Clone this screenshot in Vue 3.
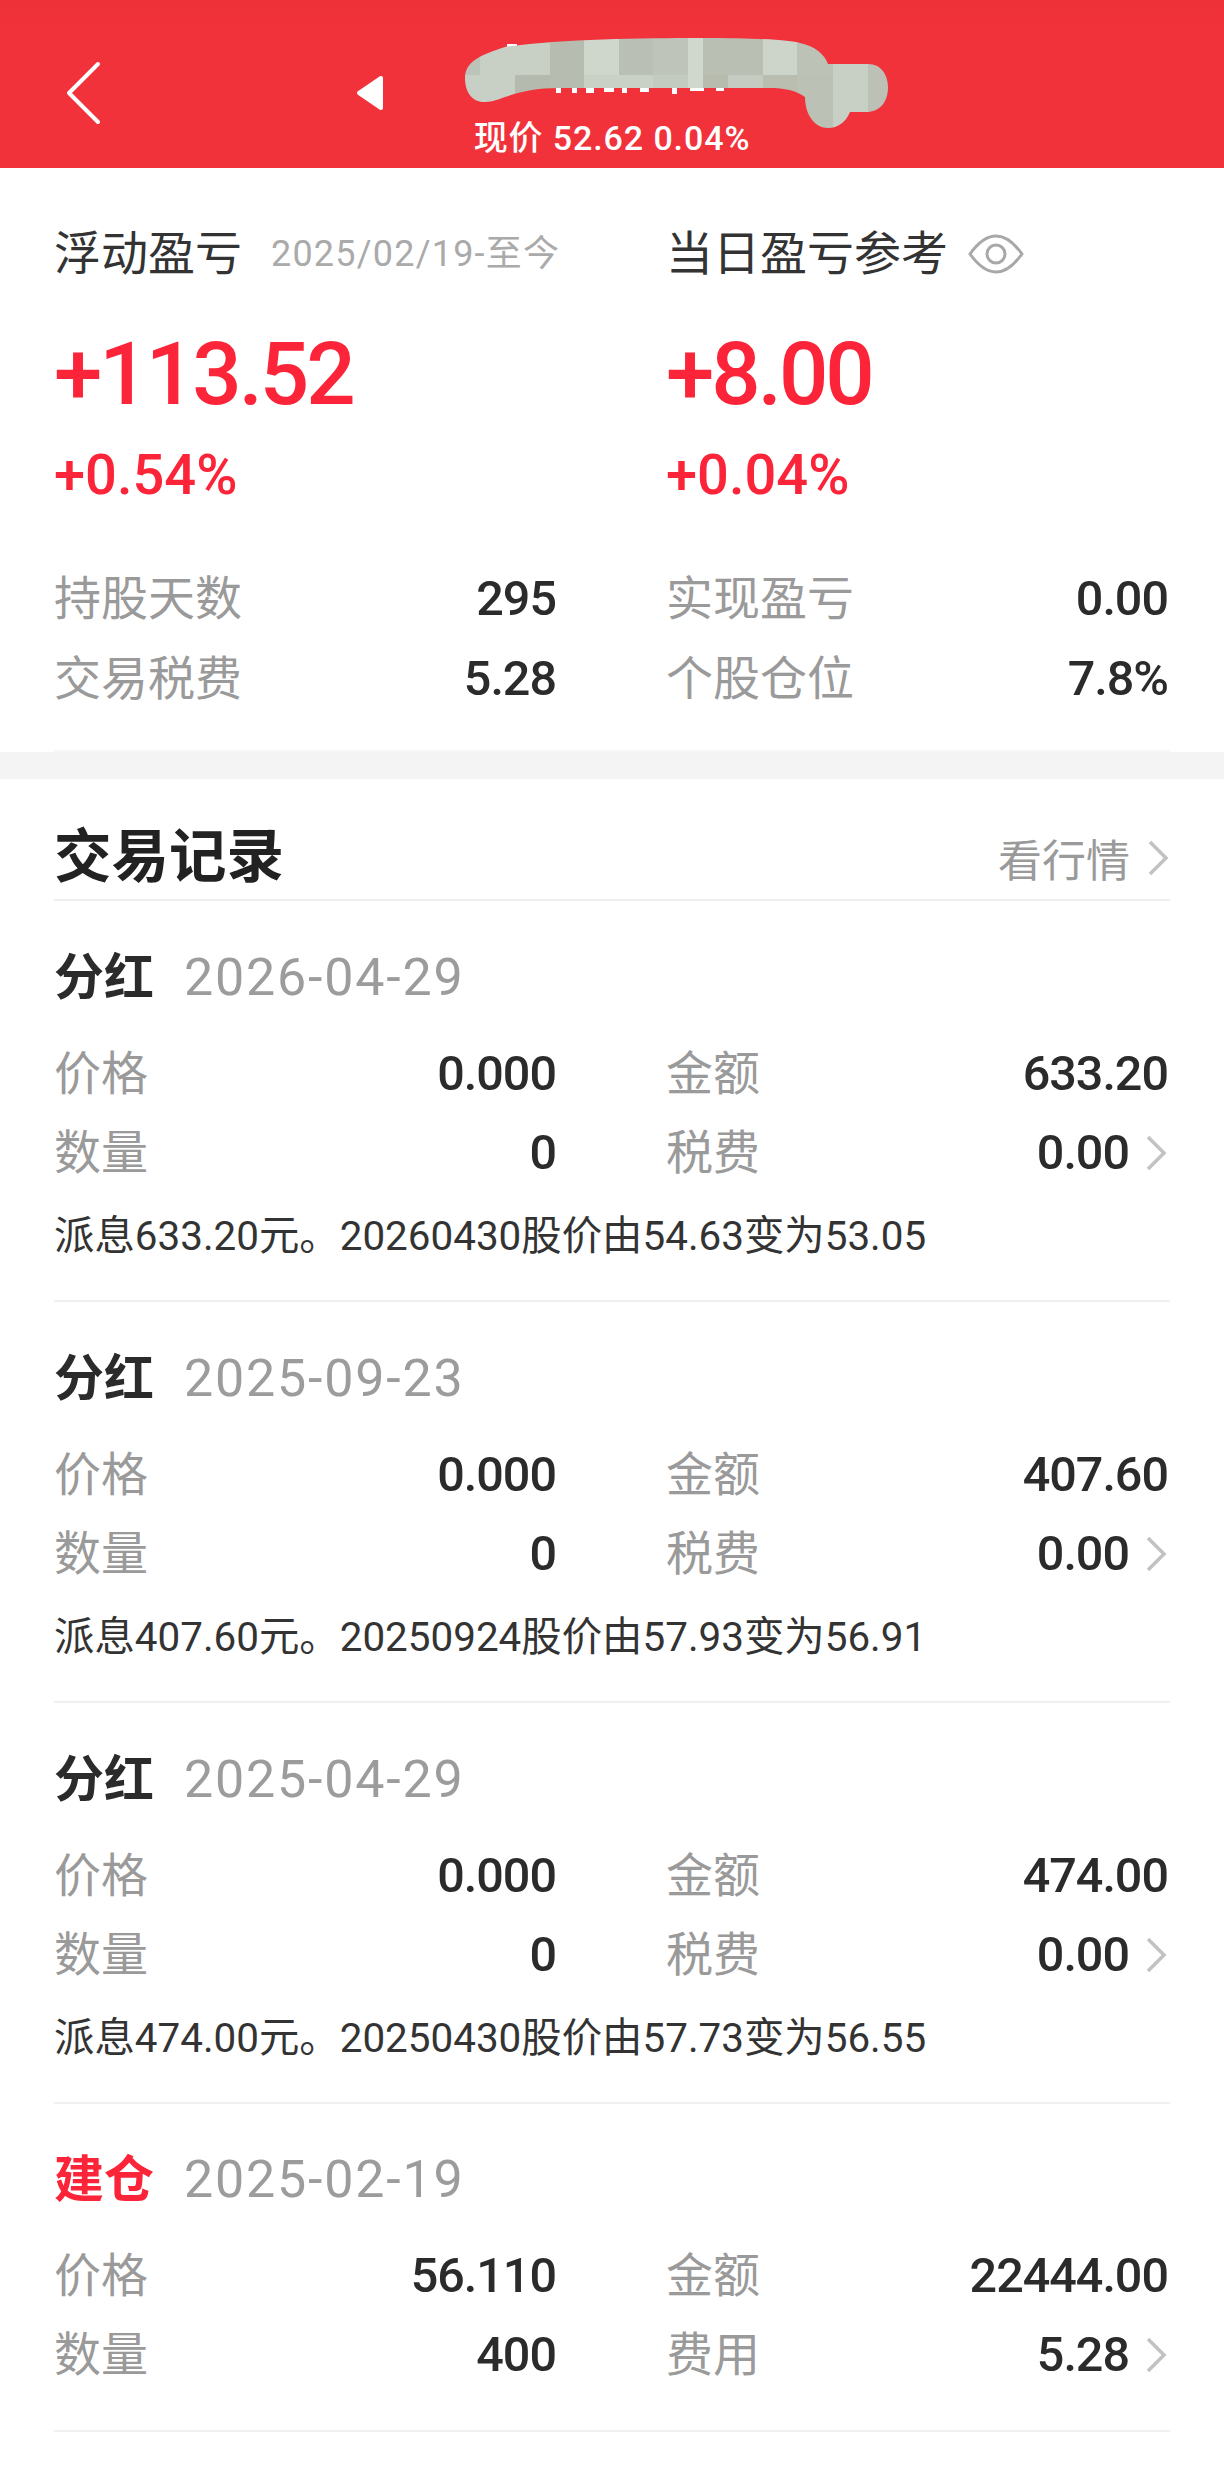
<script setup>
const topTiles = [
  [465, 15, '#bcc4b9'], [480, 70, '#c8cfc4'], [550, 34, '#b6bcb0'], [584, 35, '#cfd6cc'],
  [619, 34, '#b9bfb4'], [653, 35, '#bec4b9'], [688, 15, '#d0d8ce'], [703, 60, '#b9bfb3'],
  [763, 34, '#cdd4ca'], [797, 36, '#bdc2b6'], [833, 35, '#c8cfc4'], [868, 22, '#bdc1b5']
]
const lowTiles = [
  [465, 50, '#c8cfc4'], [515, 35, '#b4baad'], [550, 34, '#b6bcb0'], [584, 69, '#c9d0c6'],
  [653, 35, '#c3cabf'], [688, 15, '#d0d8ce'], [703, 25, '#b7bcae'], [728, 35, '#c5cbc0'],
  [763, 34, '#b9beb1'], [797, 36, '#bcc1b5'], [833, 35, '#c8cfc4'], [868, 22, '#bdc1b5']
]
const scraps = [
  [507, 44, 10, 4], [556, 88, 5, 5], [572, 88, 5, 5], [586, 88, 8, 5], [604, 88, 10, 4],
  [622, 88, 5, 5], [640, 88, 9, 4], [672, 88, 5, 6], [690, 88, 14, 3], [716, 88, 8, 3]
]
const stats = [
  [{ label: '持股天数', value: '295' }, { label: '实现盈亏', value: '0.00' }],
  [{ label: '交易税费', value: '5.28' }, { label: '个股仓位', value: '7.8%' }]
]
const records = [
  { type: '分红', date: '2026-04-29', price: '0.000', amount: '633.20', qty: '0', feeLabel: '税费', fee: '0.00', note: '派息633.20元。20260430股价由54.63变为53.05' },
  { type: '分红', date: '2025-09-23', price: '0.000', amount: '407.60', qty: '0', feeLabel: '税费', fee: '0.00', note: '派息407.60元。20250924股价由57.93变为56.91' },
  { type: '分红', date: '2025-04-29', price: '0.000', amount: '474.00', qty: '0', feeLabel: '税费', fee: '0.00', note: '派息474.00元。20250430股价由57.73变为56.55' },
  { type: '建仓', date: '2025-02-19', price: '56.110', amount: '22444.00', qty: '400', feeLabel: '费用', fee: '5.28', note: '', buy: true }
]
</script>

<template>
  <div class="page">
    <header class="bar">
      <div class="bar-left">
        <svg class="back" viewBox="0 0 40 68" width="40" height="68">
          <path d="M33 5 L4 34 L33 63" fill="none" stroke="#fff" stroke-width="4" stroke-linecap="round" stroke-linejoin="round" />
        </svg>
        <svg class="tri" viewBox="0 0 30 38" width="30" height="38">
          <path d="M4 19 L26 4 L26 34 Z" fill="#fff" stroke="#fff" stroke-width="4" stroke-linejoin="round" />
        </svg>
      </div>
      <div class="sub">现价 52.62 0.04%</div>
      <svg class="blob" viewBox="460 30 440 105" width="440" height="105">
        <defs>
          <clipPath id="blobClip">
            <path d="M465 78 C465 62 480 55 505 47 C560 39 640 38 700 38 C760 38 790 40 800 43 C815 46 825 55 828 64 L868 64 C882 64 888 76 888 87 C888 102 880 112 866 112 L850 112 C846 122 838 128 828 128 C815 128 805 115 805 97 C798 92 790 89 775 88 L560 88 C535 88 520 92 505 97 C495 101 490 102 484 102 C472 102 465 92 465 78 Z" />
          </clipPath>
        </defs>
        <rect v-for="(s, i) in scraps" :key="'s' + i" :x="s[0]" :y="s[1]" :width="s[2]" :height="s[3]" fill="#fff" />
        <g clip-path="url(#blobClip)">
          <rect v-for="(t, i) in topTiles" :key="'t' + i" :x="t[0]" y="30" :width="t[1]" height="45" :fill="t[2]" />
          <rect v-for="(t, i) in lowTiles" :key="'l' + i" :x="t[0]" y="75" :width="t[1]" height="60" :fill="t[2]" />
        </g>
      </svg>
    </header>

    <section class="summary">
      <div class="cols head">
        <div class="head-cell">
          <span class="head-title">浮动盈亏</span>
          <span class="head-date">2025/02/19-至今</span>
        </div>
        <div class="head-cell">
          <span class="head-title">当日盈亏参考</span>
          <svg class="eye" viewBox="0 0 56 40" width="56" height="40">
            <path d="M2 20 C12 6 20 2 28 2 C36 2 44 6 54 20 C44 34 36 38 28 38 C20 38 12 34 2 20 Z" fill="none" stroke="#a8a8a8" stroke-width="3" />
            <circle cx="28" cy="20" r="9" fill="none" stroke="#a8a8a8" stroke-width="3" />
          </svg>
        </div>
      </div>
      <div class="cols big">
        <div>+113.52</div>
        <div>+8.00</div>
      </div>
      <div class="cols pct">
        <div>+0.54%</div>
        <div>+0.04%</div>
      </div>
      <div class="stat-list">
        <div v-for="(row, i) in stats" :key="i" class="cols kv">
          <div v-for="cell in row" :key="cell.label" class="pair">
            <span class="k">{{ cell.label }}</span>
            <span class="v">{{ cell.value }}</span>
          </div>
        </div>
      </div>
    </section>

    <div class="band"></div>

    <section class="trades">
      <div class="trades-head">
        <h2 class="trades-title">交易记录</h2>
        <div class="market">
          <span>看行情</span>
          <svg class="chev" viewBox="0 0 26 38" width="26" height="38">
            <path d="M6 3 L22 19 L6 35" fill="none" stroke="#c2c2c2" stroke-width="3.5" />
          </svg>
        </div>
      </div>

      <article v-for="r in records" :key="r.date" class="record" :class="{ last: r.buy }">
        <div class="rec-head">
          <span class="rec-type" :class="{ red: r.buy }">{{ r.type }}</span>
          <span class="rec-date">{{ r.date }}</span>
        </div>
        <div class="cols kv first">
          <div class="pair"><span class="k">价格</span><span class="v">{{ r.price }}</span></div>
          <div class="pair"><span class="k">金额</span><span class="v">{{ r.amount }}</span></div>
        </div>
        <div class="cols kv second">
          <div class="pair"><span class="k">数量</span><span class="v">{{ r.qty }}</span></div>
          <div class="pair">
            <span class="k">{{ r.feeLabel }}</span>
            <span class="v-wrap">
              <span class="v">{{ r.fee }}</span>
              <svg class="chev" viewBox="0 0 26 38" width="26" height="38">
                <path d="M6 3 L22 19 L6 35" fill="none" stroke="#c2c2c2" stroke-width="3.5" />
              </svg>
            </span>
          </div>
        </div>
        <p v-if="r.note" class="note">{{ r.note }}</p>
      </article>
    </section>
  </div>
</template>

<style>
html, body { margin: 0; background: #fff; }
</style>

<style scoped>
.page {
  width: 1224px;
  min-height: 2486px;
  background: #fff;
  font-family: Roboto, "Noto Sans CJK SC", sans-serif;
  color: #333;
  overflow: hidden;
}
.bar {
  position: relative;
  height: 168px;
  background: linear-gradient(#ee3039 0, #f1323b 30px);
  display: grid;
  grid-template-columns: 1fr auto 1fr;
}
.bar-left { display: flex; align-items: flex-start; }
.back { margin: 59px 0 0 65px; }
.tri { margin: 74px 0 0 250px; }
.sub {
  padding-top: 118px;
  line-height: 40px;
  font-size: 34px;
  font-weight: 500;
  letter-spacing: 0.9px;
  color: #fff;
  white-space: nowrap;
}
.blob { position: absolute; left: 460px; top: 30px; }

.summary { padding: 56px 54px 0; }
.cols {
  display: grid;
  grid-template-columns: 504px 504px;
  column-gap: 108px;
}
.head-cell { display: flex; align-items: center; height: 60px; white-space: nowrap; }
.head-title { font-size: 47px; color: #333; line-height: 60px; }
.head-date { margin-left: 29px; font-size: 36px; letter-spacing: 1.2px; color: #aaa; line-height: 60px; }
.eye { margin-left: 20px; }
.big {
  margin-top: 40px;
  font-size: 87px;
  line-height: 100px;
  font-weight: 500;
  letter-spacing: -3px;
  color: #fc2438;
}
.pct {
  margin-top: 21px;
  font-size: 56px;
  line-height: 60px;
  font-weight: 500;
  color: #fc2438;
}
.stat-list {
  margin-top: 64px;
  padding-bottom: 41px;
  display: flex;
  flex-direction: column;
  gap: 20px;
  border-bottom: 2px solid #f6f6f6;
}
.kv { line-height: 60px; height: 60px; }
.pair { display: flex; justify-content: space-between; align-items: center; padding-right: 2px; }
.k { font-size: 47px; color: #9a9a9a; }
.v { font-size: 48.5px; font-weight: 500; letter-spacing: -1px; color: #2b2b2b; }
.v-wrap { display: flex; align-items: center; }
.v-wrap .chev { margin-left: 13px; }

.band { height: 27px; background: #f4f4f4; }

.trades { padding: 44px 54px 0; }
.trades-head {
  display: flex;
  justify-content: space-between;
  align-items: center;
  height: 70px;
  padding-bottom: 6px;
  border-bottom: 2px solid #eeeeee;
}
.trades-title {
  margin: 0;
  font-size: 57.5px;
  line-height: 70px;
  font-weight: 700;
  color: #222;
}
.market { display: flex; align-items: center; font-size: 44px; color: #9a9a9a; }
.market .chev { margin-left: 14px; }

.record {
  padding: 45px 0 33px;
  border-bottom: 2px solid #f0f0f0;
}
.record.last { padding-top: 44px; padding-bottom: 45px; }
.rec-head { display: flex; align-items: center; height: 60px; }
.rec-type { margin-bottom: 6px; font-size: 50px; font-weight: 700; color: #2b2b2b; }
.rec-type.red { color: #fc2438; }
.rec-date { margin: 3px 0 0 30px; font-size: 52px; letter-spacing: 1.8px; color: #9c9c9c; }
.first { margin-top: 38px; }
.second { margin-top: 19px; }
.note {
  margin: 24px 0 0;
  font-size: 40.4px;
  line-height: 60px;
  color: #333;
  white-space: nowrap;
}
</style>
